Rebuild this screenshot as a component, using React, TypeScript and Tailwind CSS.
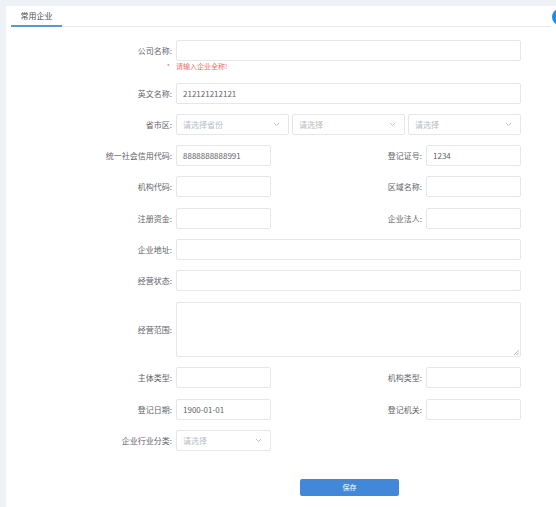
import React from "react";

const ff = "font-['Noto_Sans_CJK_SC','Noto_Sans',sans-serif]";

function Label({ text, w = "w-[166px]" }: { text: string; w?: string }) {
  return (
    <div className={`${w} shrink-0 text-right text-[8px] leading-[21px] text-[#5f6368]`}>{text}</div>
  );
}

function Input({ value, w = "w-[345px]", placeholder }: { value?: string; w?: string; placeholder?: string }) {
  return (
    <div
      className={`${w} ml-[4px] h-[21px] shrink-0 border border-[#e3e6eb] rounded-[2px] bg-white px-[6px] flex items-center text-[8px] ${
        value ? "text-[#5f6368]" : "text-[#c0c4cc]"
      }`}
    >
      {value ?? placeholder ?? ""}
    </div>
  );
}

function Select({ placeholder, w, first }: { placeholder: string; w: string; first?: boolean }) {
  return (
    <div
      className={`${w} ${first ? "ml-[4px]" : ""} h-[21px] shrink-0 border border-[#e3e6eb] rounded-[2px] bg-white pl-[6px] pr-[8px] flex items-center justify-between text-[8px] text-[#b8bcc4]`}
    >
      <span>{placeholder}</span>
      <svg width="7" height="5" viewBox="0 0 7 5" fill="none">
        <path d="M1 1 L3.5 3.5 L6 1" stroke="#b8bcc4" strokeWidth="0.9" />
      </svg>
    </div>
  );
}

function Row({ children, mt }: { children: React.ReactNode; mt: string }) {
  return <div className={`flex items-center h-[21px] ${mt}`}>{children}</div>;
}

function TwoCol({
  l1,
  v1,
  l2,
  v2,
  mt,
}: {
  l1: string;
  v1?: string;
  l2: string;
  v2?: string;
  mt: string;
}) {
  return (
    <Row mt={mt}>
      <Label text={l1} />
      <Input value={v1} w="w-[95px]" />
      <Label text={l2} w="w-[151px]" />
      <Input value={v2} w="w-[95px]" />
    </Row>
  );
}

export default function App() {
  return (
    <div className={`${ff} relative w-[556px] h-[507px] overflow-hidden bg-[#eef1f6] pt-[6px] pl-[6px]`}>
      <div className="relative h-full bg-white">
        {/* header */}
        <div className="relative mx-[5px] h-[21px] border-b border-[#e4e7ed]">
          <div className="relative w-[51px] h-full flex items-center justify-center text-[8px] text-[#4a4d52]">
            常用企业
            <div className="absolute left-0 right-0 bottom-[-1px] h-[2px] bg-[#5b98d2]" />
          </div>
        </div>

        {/* form */}
        <div className="flex flex-col">
          <Row mt="mt-[13px]">
            <Label text="公司名称:" />
            <Input />
          </Row>
          <div className="flex h-[10px] items-center text-[7px] text-[#f56c6c]">
            <div className="w-[166px] shrink-0 text-right pr-[2px]">*</div>
            <div className="ml-[4px]">请输入企业全称!</div>
          </div>
          <Row mt="mt-[12px]">
            <Label text="英文名称:" />
            <Input value="212121212121" />
          </Row>
          <Row mt="mt-[10px]">
            <Label text="省市区:" />
            <div className="ml-[4px] flex gap-[3px]">
              <Select placeholder="请选择省份" w="w-[113px]" />
              <Select placeholder="请选择" w="w-[113px]" />
              <Select placeholder="请选择" w="w-[113px]" />
            </div>
          </Row>
          <TwoCol mt="mt-[10px]" l1="统一社会信用代码:" v1="8888888888991" l2="登记证号:" v2="1234" />
          <TwoCol mt="mt-[10px]" l1="机构代码:" l2="区域名称:" />
          <TwoCol mt="mt-[11px]" l1="注册资金:" l2="企业法人:" />
          <Row mt="mt-[10px]">
            <Label text="企业地址:" />
            <Input />
          </Row>
          <Row mt="mt-[10px]">
            <Label text="经营状态:" />
            <Input />
          </Row>
          <div className="flex items-center h-[55px] mt-[11px]">
            <Label text="经营范围:" />
            <div className="relative ml-[4px] w-[345px] h-[55px] border border-[#e3e6eb] rounded-[2px] bg-white">
              <svg className="absolute right-[1px] bottom-[1px]" width="5" height="5" viewBox="0 0 5 5">
                <path d="M5 0 L0 5 M5 2.5 L2.5 5" stroke="#9aa0a8" strokeWidth="0.7" />
              </svg>
            </div>
          </div>
          <TwoCol mt="mt-[10px]" l1="主体类型:" l2="机构类型:" />
          <TwoCol mt="mt-[11px]" l1="登记日期:" v1="1900-01-01" l2="登记机关:" />
          <Row mt="mt-[10px]">
            <Label text="企业行业分类:" />
            <Select placeholder="请选择" w="w-[95px]" first />
          </Row>
          <div className="mt-[28px] ml-[294px] w-[99px] h-[17px] rounded-[2px] bg-[#4189d8] flex items-center justify-center text-[7px] text-white">
            保存
          </div>
        </div>

        <div className="absolute right-[-12px] top-[3px] w-[16px] h-[16px] rounded-full bg-[#1a8cf0]" />
      </div>
    </div>
  );
}
